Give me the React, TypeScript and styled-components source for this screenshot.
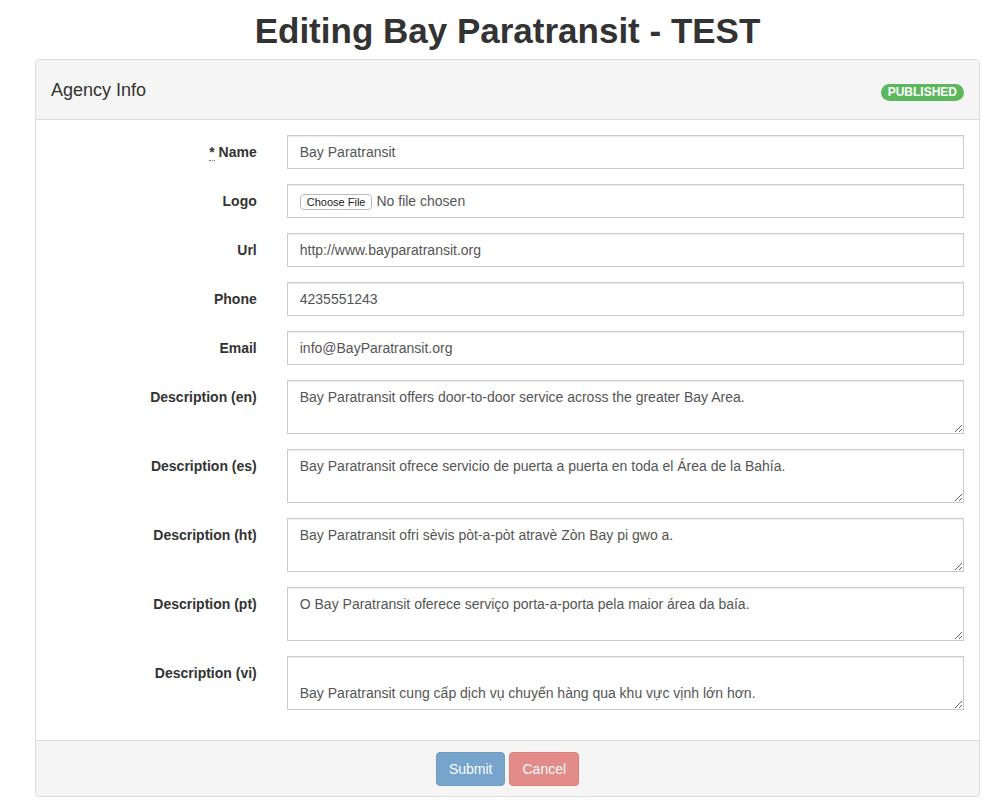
import React from "react";
import styled, { createGlobalStyle } from "styled-components";

const GlobalStyle = createGlobalStyle`
  html, body {
    margin: 0;
    padding: 0;
    background: #fff;
    font-family: "Liberation Sans", Arial, sans-serif;
    font-size: 14px;
    line-height: 1.42857;
    color: #333;
  }
  * {
    box-sizing: border-box;
  }
`;

const Page = styled.div`
  margin: 0 15px 0 35px;
`;

const Title = styled.h1`
  margin: 11px 0 8px;
  font-size: 35px;
  line-height: 40px;
  font-weight: 700;
  text-align: center;
  color: #333;
`;

const Panel = styled.div`
  border: 1px solid #ddd;
  border-radius: 4px;
  background: #fff;
  box-shadow: 0 1px 1px rgba(0, 0, 0, 0.05);
`;

const PanelHeading = styled.div`
  display: flex;
  align-items: center;
  justify-content: space-between;
  height: 60px;
  padding: 0 15px;
  background: #f5f5f5;
  border-bottom: 1px solid #ddd;
  border-radius: 3px 3px 0 0;
`;

const PanelTitle = styled.h3`
  margin: 2px 0 0;
  font-size: 18px;
  font-weight: 400;
  color: #333;
`;

const Badge = styled.span`
  display: inline-block;
  margin-top: 5px;
  padding: 2px 7px;
  font-size: 12px;
  font-weight: 700;
  line-height: 13px;
  color: #fff;
  background: #5cb85c;
  border-radius: 10px;
`;

const PanelBody = styled.div`
  padding: 15px;
`;

const FormGroup = styled.div`
  display: grid;
  grid-template-columns: 25% 75%;
  margin: 0 -15px 15px;
`;

const Label = styled.label`
  padding: 8px 15px 0;
  text-align: right;
  font-weight: 700;
`;

const Required = styled.abbr`
  text-decoration: none;
  border-bottom: 1px dotted #777;
  cursor: help;
`;

const Field = styled.div`
  padding: 0 15px;
`;

const controlStyles = `
  display: block;
  width: 100%;
  padding: 6px 12px;
  font-family: "Liberation Sans", Arial, sans-serif;
  font-size: 14px;
  line-height: 20px;
  color: #555;
  background: #fff;
  border: 1px solid #ccc;
  border-radius: 0;
  box-shadow: inset 0 1px 1px rgba(0, 0, 0, 0.075);
  outline: none;
`;

const Input = styled.input`
  ${controlStyles}
  height: 34px;
`;

const FileInput = styled.input`
  ${controlStyles}
  height: 34px;
  &::file-selector-button {
    font-family: "Liberation Sans", Arial, sans-serif;
    font-size: 11px;
    margin-right: 4px;
    padding: 1px 6px;
    background: #fff;
    border: 1px solid #bbb;
    border-radius: 4px;
    color: #222;
  }
`;

const TextArea = styled.textarea`
  ${controlStyles}
  height: 54px;
  resize: vertical;
`;

const PanelFooter = styled.div`
  display: flex;
  justify-content: center;
  gap: 4px;
  padding: 11px 15px 10px;
  background: #f5f5f5;
  border-top: 1px solid #ddd;
  border-radius: 0 0 3px 3px;
`;

const Button = styled.button<{ $variant: "primary" | "danger" }>`
  height: 34px;
  padding: 6px 12px;
  font-family: "Liberation Sans", Arial, sans-serif;
  font-size: 14px;
  line-height: 20px;
  color: #fff;
  border: 1px solid ${(p) => (p.$variant === "primary" ? "#2e6da4" : "#d43f3a")};
  background: ${(p) => (p.$variant === "primary" ? "#337ab7" : "#d9534f")};
  border-radius: 4px;
  opacity: 0.65;
  cursor: not-allowed;
`;

type Row = {
  label: string;
  value: string;
  multiline?: boolean;
};

const rows: Row[] = [
  { label: "Url", value: "http://www.bayparatransit.org" },
  { label: "Phone", value: "4235551243" },
  { label: "Email", value: "info@BayParatransit.org" },
  {
    label: "Description (en)",
    value: "Bay Paratransit offers door-to-door service across the greater Bay Area.",
    multiline: true,
  },
  {
    label: "Description (es)",
    value: "Bay Paratransit ofrece servicio de puerta a puerta en toda el Área de la Bahía.",
    multiline: true,
  },
  {
    label: "Description (ht)",
    value: "Bay Paratransit ofri sèvis pòt-a-pòt atravè Zòn Bay pi gwo a.",
    multiline: true,
  },
  {
    label: "Description (pt)",
    value: "O Bay Paratransit oferece serviço porta-a-porta pela maior área da baía.",
    multiline: true,
  },
  {
    label: "Description (vi)",
    value: "\nBay Paratransit cung cấp dịch vụ chuyển hàng qua khu vực vịnh lớn hơn.",
    multiline: true,
  },
];

export default function App() {
  return (
    <Page>
      <GlobalStyle />
      <Title>Editing Bay Paratransit - TEST</Title>
      <Panel>
        <PanelHeading>
          <PanelTitle>Agency Info</PanelTitle>
          <Badge>PUBLISHED</Badge>
        </PanelHeading>
        <PanelBody>
          <FormGroup>
            <Label>
              <Required title="required">*</Required> Name
            </Label>
            <Field>
              <Input defaultValue="Bay Paratransit" />
            </Field>
          </FormGroup>
          <FormGroup>
            <Label>Logo</Label>
            <Field>
              <FileInput type="file" />
            </Field>
          </FormGroup>
          {rows.map((row) => (
            <FormGroup key={row.label}>
              <Label>{row.label}</Label>
              <Field>
                {row.multiline ? (
                  <TextArea defaultValue={row.value} />
                ) : (
                  <Input defaultValue={row.value} />
                )}
              </Field>
            </FormGroup>
          ))}
        </PanelBody>
        <PanelFooter>
          <Button $variant="primary">Submit</Button>
          <Button $variant="danger">Cancel</Button>
        </PanelFooter>
      </Panel>
    </Page>
  );
}
